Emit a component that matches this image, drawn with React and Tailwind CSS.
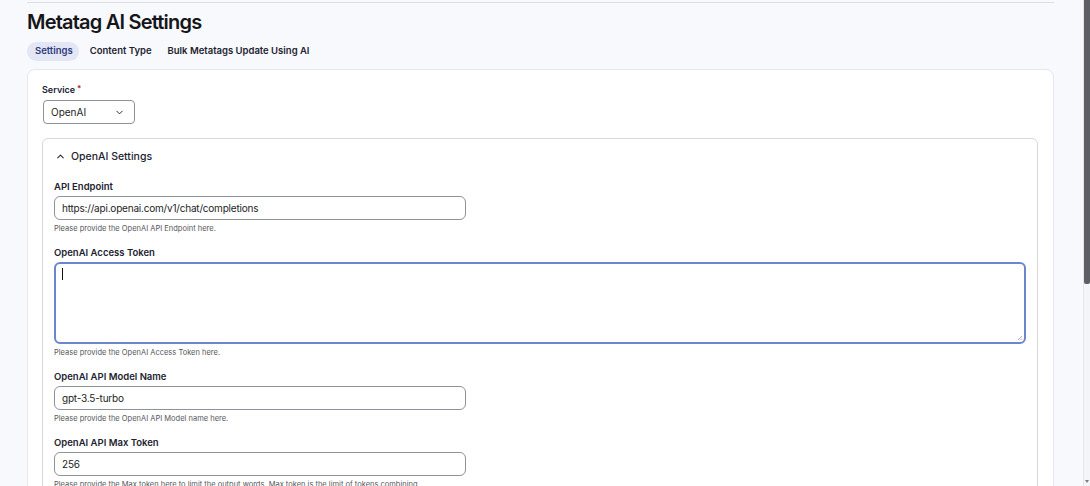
import React from 'react';
import { ChevronDown, ChevronUp } from 'lucide-react';

const font = { fontFamily: 'Inter, "Noto Sans", sans-serif' };

const Field = ({ label, help, children }) => (
  <div className="mb-[12px]">
    <div className="text-[9.5px] font-semibold text-[#222330] mb-[2px] leading-[14px]">{label}</div>
    {children}
    <div className="text-[7.5px] text-[#55565b] mt-[4px] leading-[10px] max-w-[370px]">{help}</div>
  </div>
);

const TextInput = ({ value }) => (
  <div className="w-[412px] h-[24px] border border-[#8e929c] rounded-[6px] bg-white flex items-center px-[7px] text-[10px] tracking-[-0.02em] text-[#1c1d24]">
    {value}
  </div>
);

export default function App() {
  return (
    <div className="h-[486px] overflow-hidden bg-[#f8f9fc] relative" style={font}>
      <div className="pl-[27px] pr-[36px]">
        <div className="border-t border-[#dedfe4] mt-[2px]" />
        <h1 className="text-[20px] font-semibold tracking-[-0.04em] text-[#151619] mt-[6px] leading-[26px]">
          Metatag AI Settings
        </h1>
        {/* tabs */}
        <div className="flex items-center mt-[7px] text-[9.5px] font-semibold text-[#222330]">
          <span className="bg-[#e3e6f5] text-[#2c3a7a] rounded-full pl-[8px] pr-[6px] h-[19px] flex items-center">Settings</span>
          <span className="ml-[11px] h-[19px] flex items-center">Content Type</span>
          <span className="ml-[16px] h-[19px] flex items-center">Bulk Metatags Update Using AI</span>
        </div>

        {/* card */}
        <div className="mt-[8px] bg-white border border-[#e6e7ec] rounded-[8px] pl-[14px] pr-[15px] pt-[14px] h-[500px]">
          <div className="text-[9px] font-semibold text-[#222330] leading-[12px] flex">
            Service<span className="text-[#b00d37] text-[8px] ml-[2px] -mt-[2px]">*</span>
          </div>
          <div className="mt-[4px] ml-[1px] w-[92px] h-[24px] border border-[#8e929c] rounded-[4px] flex items-center justify-between pl-[7px] pr-[9px] text-[10px] text-[#1c1d24]">
            OpenAI
            <ChevronDown size={11} strokeWidth={2} />
          </div>

          <div className="mt-[14px] border border-[#d8d9de] rounded-[6px] px-[11px] h-[400px]">
            <div className="flex items-center gap-[5px] h-[33px] mt-[1px] pl-[1px] text-[10.5px] font-medium text-[#222330]">
              <ChevronUp size={11} strokeWidth={2.2} />
              OpenAI Settings
            </div>
            <div className="mt-[7px]">
              <Field label="API Endpoint" help="Please provide the OpenAI API Endpoint here.">
                <TextInput value="https://api.openai.com/v1/chat/completions" />
              </Field>
              <Field label="OpenAI Access Token" help="Please provide the OpenAI Access Token here.">
                <div className="h-[82px] border-2 border-[#6a86cc] rounded-[6px] bg-white relative">
                  <div className="absolute left-[6px] top-[4px] w-px h-[12px] bg-[#111]" />
                  <svg className="absolute right-[1px] bottom-[1px]" width="6" height="6" viewBox="0 0 6 6">
                    <path d="M5 1 L1 5 M5 3.5 L3.5 5" stroke="#9a9aa0" strokeWidth="0.8" />
                  </svg>
                </div>
              </Field>
              <Field label="OpenAI API Model Name" help="Please provide the OpenAI API Model name here.">
                <TextInput value="gpt-3.5-turbo" />
              </Field>
              <Field
                label="OpenAI API Max Token"
                help="Please provide the Max token here to limit the output words. Max token is the limit of tokens combining prompt and completion tokens."
              >
                <TextInput value="256" />
              </Field>
            </div>
          </div>
        </div>
      </div>

      {/* scrollbar */}
      <div className="absolute right-0 top-0 h-full w-[7px] bg-[#f4f5f8] border-l border-[#e5e6ea]">
        <div className="h-[284px] bg-[#5c5f66] rounded-b-[2px]" />
        <div className="absolute bottom-[3px] left-[1px] w-0 h-0 border-l-[2.5px] border-r-[2.5px] border-t-[3px] border-l-transparent border-r-transparent border-t-[#7a7d84]" />
      </div>
    </div>
  );
}
